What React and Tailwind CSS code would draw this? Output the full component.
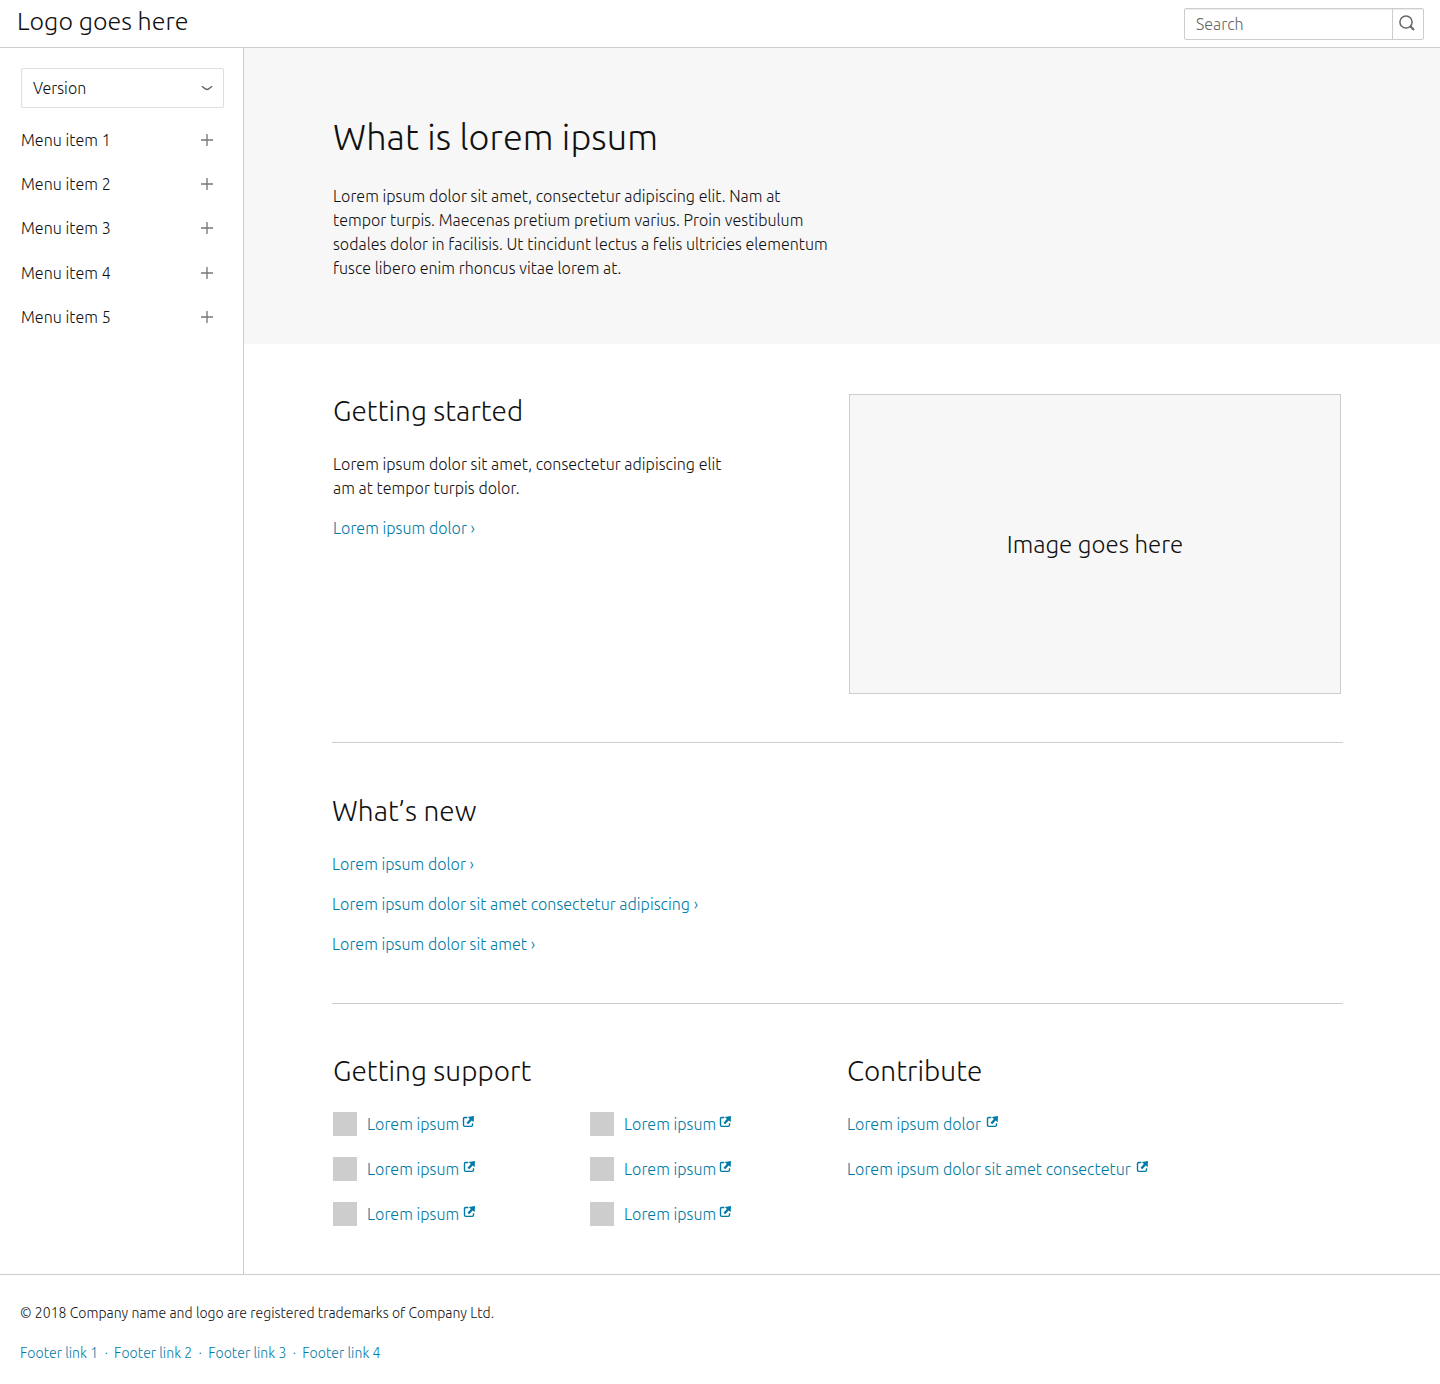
import React from "react";

const MENU = [
  { label: "Menu item 1", cls: "h-11" },
  { label: "Menu item 2", cls: "h-11" },
  { label: "Menu item 3", cls: "h-[45px] pb-px" },
  { label: "Menu item 4", cls: "h-11" },
  { label: "Menu item 5", cls: "h-11" },
];

function SearchIcon() {
  return (
    <svg width="16" height="16" viewBox="0 0 16 16" fill="none" stroke="#666" className="mr-0.5 mb-0.5 block">
      <circle cx="7" cy="7" r="6.1" strokeWidth="1.5" />
      <path d="M11.3 11.3L15 15" strokeWidth="2" />
    </svg>
  );
}

function Chevron() {
  return (
    <svg width="12" height="6" viewBox="0 0 12 6" fill="none" stroke="#666" strokeWidth="1.4" className="block">
      <path d="M0.8 1.2L4.4 3.9Q6 5.1 7.6 3.9L11.2 1.2" />
    </svg>
  );
}

function Plus() {
  return (
    <svg width="12" height="12" viewBox="0 0 12 12" fill="none" stroke="#777" strokeWidth="1.33" className="block">
      <path d="M0 6H12M6 0V12" />
    </svg>
  );
}

function External({ className = "" }) {
  return (
    <svg width="12" height="12" viewBox="0 0 12 12" fill="none" className={`block shrink-0 ${className}`}>
      <path d="M5.3 1.5H2.7Q1.5 1.5 1.5 2.8V9.1Q1.5 10.4 2.8 10.4H9.2Q10.5 10.4 10.5 9.1V7.3" stroke="#007aa6" strokeWidth="1.4" />
      <path d="M12 0L11.6 6.2L9.7 4.6L6.2 8.3L4.5 6.7L7.9 3L5.8 1.1Z" fill="#007aa6" />
    </svg>
  );
}

function H2({ children, className = "" }) {
  return <h2 className={`text-[28px] leading-8 tracking-[0.04px] ${className}`}>{children}</h2>;
}

function Link({ children, className = "" }) {
  return <a className={`block whitespace-nowrap text-[#007aa6] ${className}`}>{children}</a>;
}

function SupportItem({ iconClass }) {
  return (
    <div className="flex h-6 items-start">
      <div className="mr-2.5 size-6 bg-[#cdcdcd]" />
      <Link>Lorem ipsum</Link>
      <External className={iconClass} />
    </div>
  );
}

export default function App() {
  return (
    <div className="flex h-[1384px] w-[1440px] flex-col bg-white font-['Ubuntu','Open_Sans',sans-serif] text-base leading-6 font-light tracking-[0.035px] text-[#111]">
      <header className="flex h-12 items-start justify-between border-b border-[#cdcdcd] pr-4 pl-[17px]">
        <div className="mt-1.5 text-[25px] leading-[30px]">Logo goes here</div>
        <div className="mt-2 flex h-8 w-60 rounded-[2px] border border-[#cdcdcd] shadow-[inset_0_1px_1px_rgba(0,0,0,0.08)]">
          <div className="flex-1 pt-[3px] pl-[11px] text-[#666]">Search</div>
          <div className="flex w-[31px] items-center justify-center border-l border-[#cdcdcd]">
            <SearchIcon />
          </div>
        </div>
      </header>

      <div className="flex h-[1226px]">
        <aside className="w-[244px] border-r border-[#cdcdcd] pt-5 pr-[19px] pl-[21px]">
          <div className="flex h-10 items-center justify-between rounded-[2px] border border-[#dedede] pr-2.5 pl-[11px]">
            <span>Version</span>
            <Chevron />
          </div>
          <nav className="mt-2.5">
            {MENU.map((m) => (
              <div key={m.label} className={`flex items-center justify-between pr-[11px] ${m.cls}`}>
                <span>{m.label}</span>
                <Plus />
              </div>
            ))}
          </nav>
        </aside>

        <main className="flex-1">
          <section className="h-[296px] bg-[#f7f7f7] pt-[65px] pl-[89px]">
            <h1 className="text-4xl leading-[48px] tracking-[0.08px]">What is lorem ipsum</h1>
            <p className="mt-[23px] whitespace-nowrap">
              Lorem ipsum dolor sit amet, consectetur adipiscing elit. Nam at<br />
              tempor turpis. Maecenas pretium pretium varius. Proin vestibulum<br />
              sodales dolor in facilisis. Ut tincidunt lectus a felis ultricies elementum<br />
              fusce libero enim rhoncus vitae lorem at.
            </p>
          </section>

          <div className="ml-[88px] w-[1011px]">
            <section className="flex h-[399px] justify-between border-b border-[#cdcdcd] pt-[50px] pr-0.5 pl-px">
              <div>
                <H2 className="mt-px">Getting started</H2>
                <p className="mt-[25px] whitespace-nowrap">
                  Lorem ipsum dolor sit amet, consectetur adipiscing elit<br />
                  am at tempor turpis dolor.
                </p>
                <Link className="mt-4">Lorem ipsum dolor ›</Link>
              </div>
              <div className="flex h-[300px] w-[492px] items-center justify-center border border-[#cdcdcd] bg-[#f7f7f7] pt-0.5 text-2xl">
                Image goes here
              </div>
            </section>

            <section className="h-[261px] border-b border-[#cdcdcd] pt-[52px]">
              <H2>What’s new</H2>
              <div className="mt-[25px] flex flex-col gap-4">
                <Link>Lorem ipsum dolor ›</Link>
                <Link>Lorem ipsum dolor sit amet consectetur adipiscing ›</Link>
                <Link>Lorem ipsum dolor sit amet ›</Link>
              </div>
            </section>

            <section className="flex pt-[51px] pl-px">
              <div className="w-[514px]">
                <H2>Getting support</H2>
                <div className="mt-[25px] grid grid-cols-[257px_257px] gap-y-[21px]">
                  <SupportItem iconClass="mt-1 ml-[3px]" />
                  <SupportItem iconClass="mt-1 ml-[3px]" />
                  <SupportItem iconClass="mt-1 ml-1" />
                  <SupportItem iconClass="mt-1 ml-[3px]" />
                  <SupportItem iconClass="mt-1 ml-1" />
                  <SupportItem iconClass="mt-1 ml-[3px]" />
                </div>
              </div>
              <div>
                <H2>Contribute</H2>
                <div className="mt-[25px] flex flex-col gap-[21px]">
                  <div className="flex">
                    <Link>Lorem ipsum dolor</Link>
                    <External className="mt-1 ml-[5px]" />
                  </div>
                  <div className="flex">
                    <Link>Lorem ipsum dolor sit amet consectetur</Link>
                    <External className="mt-1 ml-[5px]" />
                  </div>
                </div>
              </div>
            </section>
          </div>
        </main>
      </div>

      <footer className="flex-1 border-t border-[#cdcdcd] pt-[26px] pl-5 text-sm leading-6">
        <p className="tracking-[0.03px]">© 2018 Company name and logo are registered trademarks of Company Ltd.</p>
        <div className="mt-4 flex tracking-[0.04px] text-[#007aa6]">
          {["Footer link 1", "Footer link 2", "Footer link 3", "Footer link 4"].map((label, i) => (
            <React.Fragment key={label}>
              {i > 0 && <span className="w-4 text-center">·</span>}
              <a>{label}</a>
            </React.Fragment>
          ))}
        </div>
      </footer>
    </div>
  );
}
